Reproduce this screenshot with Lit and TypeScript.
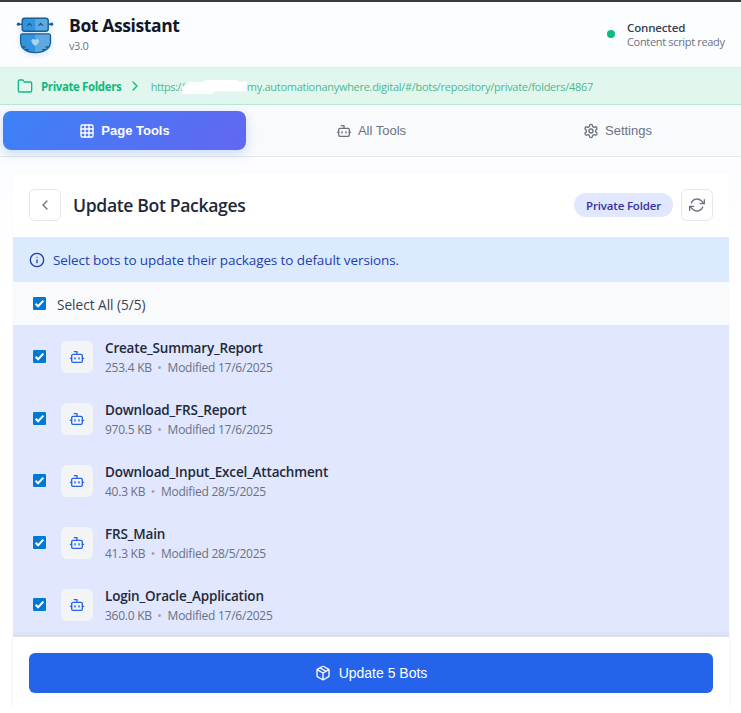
import { LitElement, html, css, svg } from "lit";
import { customElement, property } from "lit/decorators.js";

const ICONS = {
  grid: svg`<rect x="3" y="3" width="18" height="18" rx="2"/><path d="M3 9h18M3 15h18M9 3v18M15 3v18"/>`,
  bot: svg`<path d="M12 8V4H8"/><rect x="4" y="8" width="16" height="12" rx="2"/><path d="M2 14h2M20 14h2M15 13v2M9 13v2"/>`,
  settings: svg`<path d="M12.22 2h-.44a2 2 0 0 0-2 2v.18a2 2 0 0 1-1 1.73l-.43.25a2 2 0 0 1-2 0l-.15-.08a2 2 0 0 0-2.73.73l-.22.38a2 2 0 0 0 .73 2.73l.15.1a2 2 0 0 1 1 1.72v.51a2 2 0 0 1-1 1.74l-.15.09a2 2 0 0 0-.73 2.73l.22.38a2 2 0 0 0 2.73.73l.15-.08a2 2 0 0 1 2 0l.43.25a2 2 0 0 1 1 1.73V20a2 2 0 0 0 2 2h.44a2 2 0 0 0 2-2v-.18a2 2 0 0 1 1-1.73l.43-.25a2 2 0 0 1 2 0l.15.08a2 2 0 0 0 2.73-.73l.22-.39a2 2 0 0 0-.73-2.73l-.15-.08a2 2 0 0 1-1-1.74v-.5a2 2 0 0 1 1-1.74l.15-.09a2 2 0 0 0 .73-2.73l-.22-.38a2 2 0 0 0-2.73-.73l-.15.08a2 2 0 0 1-2 0l-.43-.25a2 2 0 0 1-1-1.73V4a2 2 0 0 0-2-2z"/><circle cx="12" cy="12" r="3"/>`,
  folder: svg`<path d="M22 19a2 2 0 0 1-2 2H4a2 2 0 0 1-2-2V5a2 2 0 0 1 2-2h5l2 3h9a2 2 0 0 1 2 2z"/>`,
  right: svg`<path d="m9 18 6-6-6-6"/>`,
  left: svg`<path d="m15 18-6-6 6-6"/>`,
  refresh: svg`<path d="M23 4v6h-6M1 20v-6h6"/><path d="M3.51 9a9 9 0 0 1 14.85-3.36L23 10M1 14l4.64 4.36A9 9 0 0 0 20.49 15"/>`,
  info: svg`<circle cx="12" cy="12" r="10"/><path d="M12 16v-4M12 8h.01"/>`,
  box: svg`<path d="m16.5 9.4-9-5.19M21 16V8a2 2 0 0 0-1-1.73l-7-4a2 2 0 0 0-2 0l-7 4A2 2 0 0 0 3 8v8a2 2 0 0 0 1 1.73l7 4a2 2 0 0 0 2 0l7-4A2 2 0 0 0 21 16z"/><path d="M3.27 6.96 12 12.01l8.73-5.05M12 22.08V12"/>`,
};

@customElement("ui-icon")
class UiIcon extends LitElement {
  @property() name: keyof typeof ICONS = "bot";
  static styles = css`
    :host { display: block; width: 16px; height: 16px; flex: none; }
    svg { display: block; width: 100%; height: 100%; fill: none; stroke: currentColor; stroke-width: 2; stroke-linecap: round; stroke-linejoin: round; }
  `;
  render() {
    return html`<svg viewBox="0 0 24 24">${ICONS[this.name]}</svg>`;
  }
}

@customElement("check-box")
class CheckBox extends LitElement {
  static styles = css`
    :host { display: block; width: 13px; height: 13px; flex: none; }
    svg { display: block; }
  `;
  render() {
    return html`<svg width="13" height="13" viewBox="0 0 13 13"><rect width="13" height="13" rx="1.2" fill="#0078d4"/><path d="M2.6 6.8 5.1 9.3 10.4 3.6" fill="none" stroke="#fff" stroke-width="2"/></svg>`;
  }
}

@customElement("robot-logo")
class RobotLogo extends LitElement {
  static styles = css`
    :host { display: block; width: 38px; height: 38px; flex: none; }
    svg { display: block; overflow: visible; filter: drop-shadow(0 2px 3px #3b82f633); }
  `;
  render() {
    return html`<svg width="38" height="38" viewBox="0 0 38 38">
      <path d="M2 8.2h4M32 8.2h4" stroke="#155f95" stroke-width="1.6"/>
      <circle cx="2.4" cy="8.2" r="1.6" fill="#155f95"/><circle cx="35.6" cy="8.2" r="1.6" fill="#155f95"/>
      <rect x="6.2" y="2.2" width="26" height="13" rx="2.5" fill="#3592dc"/>
      <path d="M19.2 2.2h10.5a2.5 2.5 0 0 1 2.5 2.5v8a2.5 2.5 0 0 1-2.5 2.5H19.2z" fill="#5fa8e0"/>
      <rect x="6.2" y="2.2" width="26" height="13" rx="2.5" fill="none" stroke="#155f95" stroke-width="1.4"/>
      <path d="m11.2 9.8 2.3-2.4 2.3 2.4M22.4 9.8l2.3-2.4 2.3 2.4" fill="none" stroke="#155f95" stroke-width="1.2"/>
      <path d="M6 17.9h26.5q2 0 2 2v6c0 6-6 10.800-15.300 10.800S4.600 31.900 4.600 25.900v-6q0-2 1.400-2z" fill="#3592dc"/>
      <path d="M19.200 17.900h13.300q2 0 2 2v6c0 6-6 10.800-15.300 10.800z" fill="#5fa8e0"/>
      <path d="M6 17.900h26.500q2 0 2 2v6c0 6-6 10.800-15.300 10.800S4.600 31.900 4.600 25.900v-6q0-2 1.400-2zM6.500 31h3M9 33.600h4M29.500 31h3M26 33.600h4" fill="none" stroke="#155f95" stroke-width="1.300"/>
      <path d="M19.200 30c-2-1.800-3.900-3.300-3.900-5 0-2.200 2.900-2.700 3.900-.8 1-1.900 3.900-1.400 3.900.8 0 1.700-1.900 3.200-3.900 5z" fill="#a9d3f2"/>
    </svg>`;
  }
}

@customElement("bot-row")
class BotRow extends LitElement {
  @property() name = "";
  @property() size = "";
  @property() date = "";
  static styles = css`
    :host { display: flex; align-items: center; height: 61px; padding: 0 20px; border-bottom: 1px solid #e2e6f4; background: #e0e7ff; }
    .tile { display: grid; place-items: center; width: 32px; height: 32px; margin: 1px 12px 0 15px; border-radius: 6px; background: #f3f4f6; color: #2563eb; }
    .text { padding-top: 1px; }
    .name { font-size: 13.5px; line-height: 20px; font-weight: 600; color: #1f2937; letter-spacing: -0.18px; white-space: nowrap; }
    .meta { display: flex; gap: 6px; font-size: 12px; line-height: 19px; color: #6b7280; letter-spacing: -0.25px; white-space: nowrap; }
    .sep { color: #9ca3af; margin-left: -0.5px; }
  `;
  render() {
    return html`<check-box></check-box>
      <div class="tile"><ui-icon name="bot"></ui-icon></div>
      <div class="text"><div class="name">${this.name}</div>
      <div class="meta"><span>${this.size}</span><span class="sep">•</span><span>Modified ${this.date}</span></div></div>`;
  }
}

@customElement("app-root")
class AppRoot extends LitElement {
  static styles = css`
    :host { display: flex; flex-direction: column; height: 713px; box-sizing: border-box; overflow: hidden; border-top: 2px solid #3b3b3f; background: linear-gradient(#f9faff, #fff 40%); font-family: "Open Sans", "Noto Sans", sans-serif; white-space: nowrap; }
    .header { display: flex; align-items: center; height: 65px; padding: 0 16px; background: #fcfdff; }
    .brand { margin: -3px 0 0 15px; flex: 1; }
    .title { font-size: 17.5px; line-height: 24px; font-weight: 700; color: #111827; letter-spacing: -0.38px; }
    .version { font-size: 11px; line-height: 17px; color: #6b7280; letter-spacing: -0.4px; }
    .dot { width: 8px; height: 8px; margin: -2px 12px 0 0; border-radius: 50%; background: #10b981; }
    .status { width: 98px; font-size: 11.5px; line-height: 14px; color: #374151; font-weight: 600; letter-spacing: -0.15px; }
    .sub { font-size: 11px; line-height: 13px; font-weight: 400; color: #6b7280; letter-spacing: -0.33px; }
    .crumbs { display: flex; align-items: center; height: 38px; box-sizing: border-box; padding-left: 17px; background: #e1f7ee; border-bottom: 1px solid #b5ead6; border-top: 1px solid #dfe9e8; color: #10b981; }
    .crumbs b { margin: 0 6px 0 8px; font-size: 11.5px; font-weight: 700; letter-spacing: -0.39px; }
    .url { display: flex; align-items: center; margin-left: 7.5px; font-size: 11px; letter-spacing: -0.29px; color: #4db793; }
    .scheme { width: 31px; letter-spacing: -0.5px; }
    .mask { width: 65px; height: 14px; flex: none; position: relative; margin-top: 2px; }
    .tabs { display: flex; align-items: flex-start; height: 52px; box-sizing: border-box; padding: 6px 2px 0 3px; gap: 3.5px; border-bottom: 1px solid #e5e7eb; background: #f9fafc; font-family: "Liberation Sans", sans-serif; font-size: 13px; color: #6b7280; }
    .tab { flex: 1 1 0; display: flex; align-items: center; justify-content: center; gap: 6px; height: 39px; border-radius: 8px; }
    .tab.on { background: linear-gradient(135deg, #3b82f6, #6366f1); color: #fff; font-weight: 700; box-shadow: 0 4px 12px #3b82f640; }
    .card { margin: 16px 12px 0 13px; background: #fff; height: 534px; box-shadow: 0 0 2px #0000000a; }
    .head { display: flex; align-items: center; height: 64px; padding: 0 16px; }
    .btn { display: grid; place-items: center; width: 32px; height: 32px; box-sizing: border-box; border: 1px solid #e5e7eb; border-radius: 6px; color: #6b7280; }
    h1 { margin: 0 0 0 12px; flex: 1; font-size: 17.6px; font-weight: 600; letter-spacing: -0.36px; color: #1f2937; }
    .pill { height: 24px; line-height: 25px; padding: 0 12px; margin-right: 8px; border-radius: 12px; background: #e0e7ff; color: #3730a3; font-size: 11.5px; font-weight: 600; letter-spacing: -0.17px; }
    .info { display: flex; align-items: center; height: 45px; padding-left: 16px; gap: 8px; background: #dbeafe; color: #1e40af; font-size: 13.5px; letter-spacing: -0.1px; }
    .all { display: flex; align-items: center; height: 44px; box-sizing: border-box; padding-left: 20px; gap: 11px; border-bottom: 1px solid #e5e7eb; background: #f9fafb; color: #374151; font-size: 13.6px; }
    .all span { padding-top: 1px; }
    .list { height: 310px; overflow: hidden; background: #e0e7ff; }
    .foot { padding: 16px; border-top: 1px solid #e0e2ea; box-shadow: 0 -2px 4px #0000000d; position: relative; background: #fff; }
    .update { display: flex; align-items: center; justify-content: center; gap: 8px; height: 40px; border-radius: 6px; background: #2563eb; color: #fff; font: 14px "Liberation Sans", sans-serif; }
  `;
  bots = [
    ["Create_Summary_Report", "253.4 KB", "17/6/2025"],
    ["Download_FRS_Report", "970.5 KB", "17/6/2025"],
    ["Download_Input_Excel_Attachment", "40.3 KB", "28/5/2025"],
    ["FRS_Main", "41.3 KB", "28/5/2025"],
    ["Login_Oracle_Application", "360.0 KB", "17/6/2025"],
  ];
  render() {
    return html`
      <div class="header">
        <robot-logo></robot-logo>
        <div class="brand"><div class="title">Bot Assistant</div><div class="version">v3.0</div></div>
        <div class="dot"></div>
        <div class="status"><div>Connected</div><div class="sub">Content script ready</div></div>
      </div>
      <div class="crumbs"><ui-icon name="folder"></ui-icon><b>Private Folders</b><ui-icon name="right"></ui-icon>
        <div class="url"><span class="scheme">https://</span><svg class="mask" viewBox="0 0 65 14"><path d="M0 6.500 6 4.500V2h16l1-2h32l1 1.700h9V11.300H32.500L31 14H0z" fill="#fff"/></svg><span>my.automationanywhere.digital/#/bots/repository/private/folders/4867</span></div></div>
      <div class="tabs">
        <div class="tab on"><ui-icon name="grid"></ui-icon>Page Tools</div>
        <div class="tab"><ui-icon name="bot"></ui-icon>All Tools</div>
        <div class="tab"><ui-icon name="settings"></ui-icon>Settings</div>
      </div>
      <div class="card">
        <div class="head"><div class="btn"><ui-icon name="left"></ui-icon></div><h1>Update Bot Packages</h1><div class="pill">Private Folder</div><div class="btn"><ui-icon name="refresh"></ui-icon></div></div>
        <div class="info"><ui-icon name="info"></ui-icon><span>Select bots to update their packages to default versions.</span></div>
        <div class="all"><check-box></check-box><span>Select All (5/5)</span></div>
        <div class="list">${this.bots.map(([n, s, d]) => html`<bot-row .name=${n} .size=${s} .date=${d}></bot-row>`)}</div>
        <div class="foot"><div class="update"><ui-icon name="box"></ui-icon>Update 5 Bots</div></div>
      </div>`;
  }
}
